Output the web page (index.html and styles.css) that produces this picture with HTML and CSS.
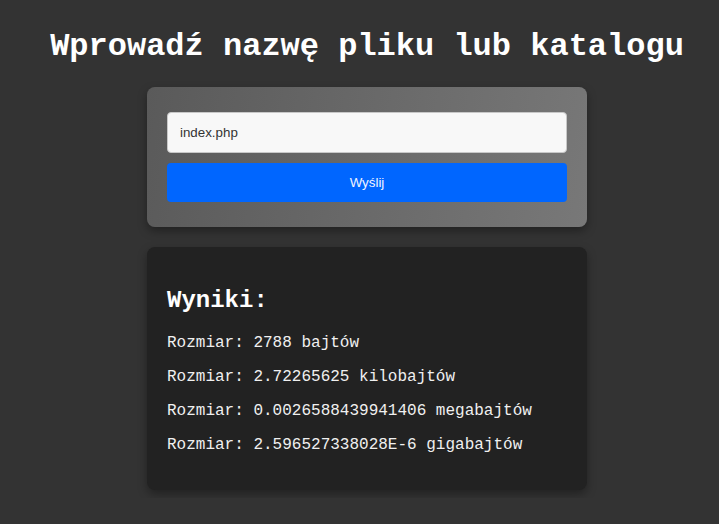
FILE: index.html
```html
<!DOCTYPE html>
<html lang="pl">
<head>
<meta charset="utf-8">
<title>Rozmiar pliku</title>
<link rel="stylesheet" href="styles.css">
</head>
<body>
<h1 class="title">Wprowadź nazwę pliku lub katalogu</h1>
<form class="card form-card">
  <input class="field" type="text" value="index.php">
  <button class="submit" type="button">Wyślij</button>
</form>
<div class="card results">
  <h2 class="results-title">Wyniki:</h2>
  <p class="line">Rozmiar: 2788 bajtów</p>
  <p class="line">Rozmiar: 2.72265625 kilobajtów</p>
  <p class="line">Rozmiar: 0.0026588439941406 megabajtów</p>
  <p class="line">Rozmiar: 2.596527338028E-6 gigabajtów</p>
</div>
</body>
</html>
```
FILE: styles.css
```css
html, body {
  background: #333333;
}
body {
  margin: 0;
  padding: 7px 0 8px 15px;
  display: flex;
  flex-direction: column;
  align-items: center;
  font-family: "Liberation Mono", "Courier New", monospace;
  color: #ffffff;
}
.title {
  font-size: 32px;
  font-weight: bold;
  margin: 21.44px 0;
  white-space: nowrap;
  color: #ffffff;
}
.card {
  width: 440px;
  box-sizing: border-box;
  border-radius: 8px;
  box-shadow: 0 4px 10px rgba(0, 0, 0, 0.35);
}
.form-card {
  display: flex;
  flex-direction: column;
  gap: 10px;
  padding: 25px 20px;
  background: linear-gradient(100deg, #5a5a5a 0%, #787878 100%);
  margin: 0 0 20px;
}
.field {
  height: 41px;
  box-sizing: border-box;
  padding: 0 12px;
  border: 1px solid #c8c8c8;
  border-radius: 4px;
  background: #f8f8f8;
  font-family: "Liberation Sans", Arial, sans-serif;
  font-size: 13.33px;
  color: #333333;
  margin: 0;
}
.submit {
  height: 39px;
  border: none;
  border-radius: 4px;
  background: #0066ff;
  color: #f0f4ff;
  font-family: "Liberation Sans", Arial, sans-serif;
  font-size: 13.33px;
  margin: 0;
}
.results {
  background: #222222;
  padding: 20px;
}
.results-title {
  font-size: 24px;
  font-weight: bold;
  margin: 20px 0;
  color: #ffffff;
}
.line {
  font-size: 16px;
  margin: 16px 0;
  color: #f0f0f0;
}
```
